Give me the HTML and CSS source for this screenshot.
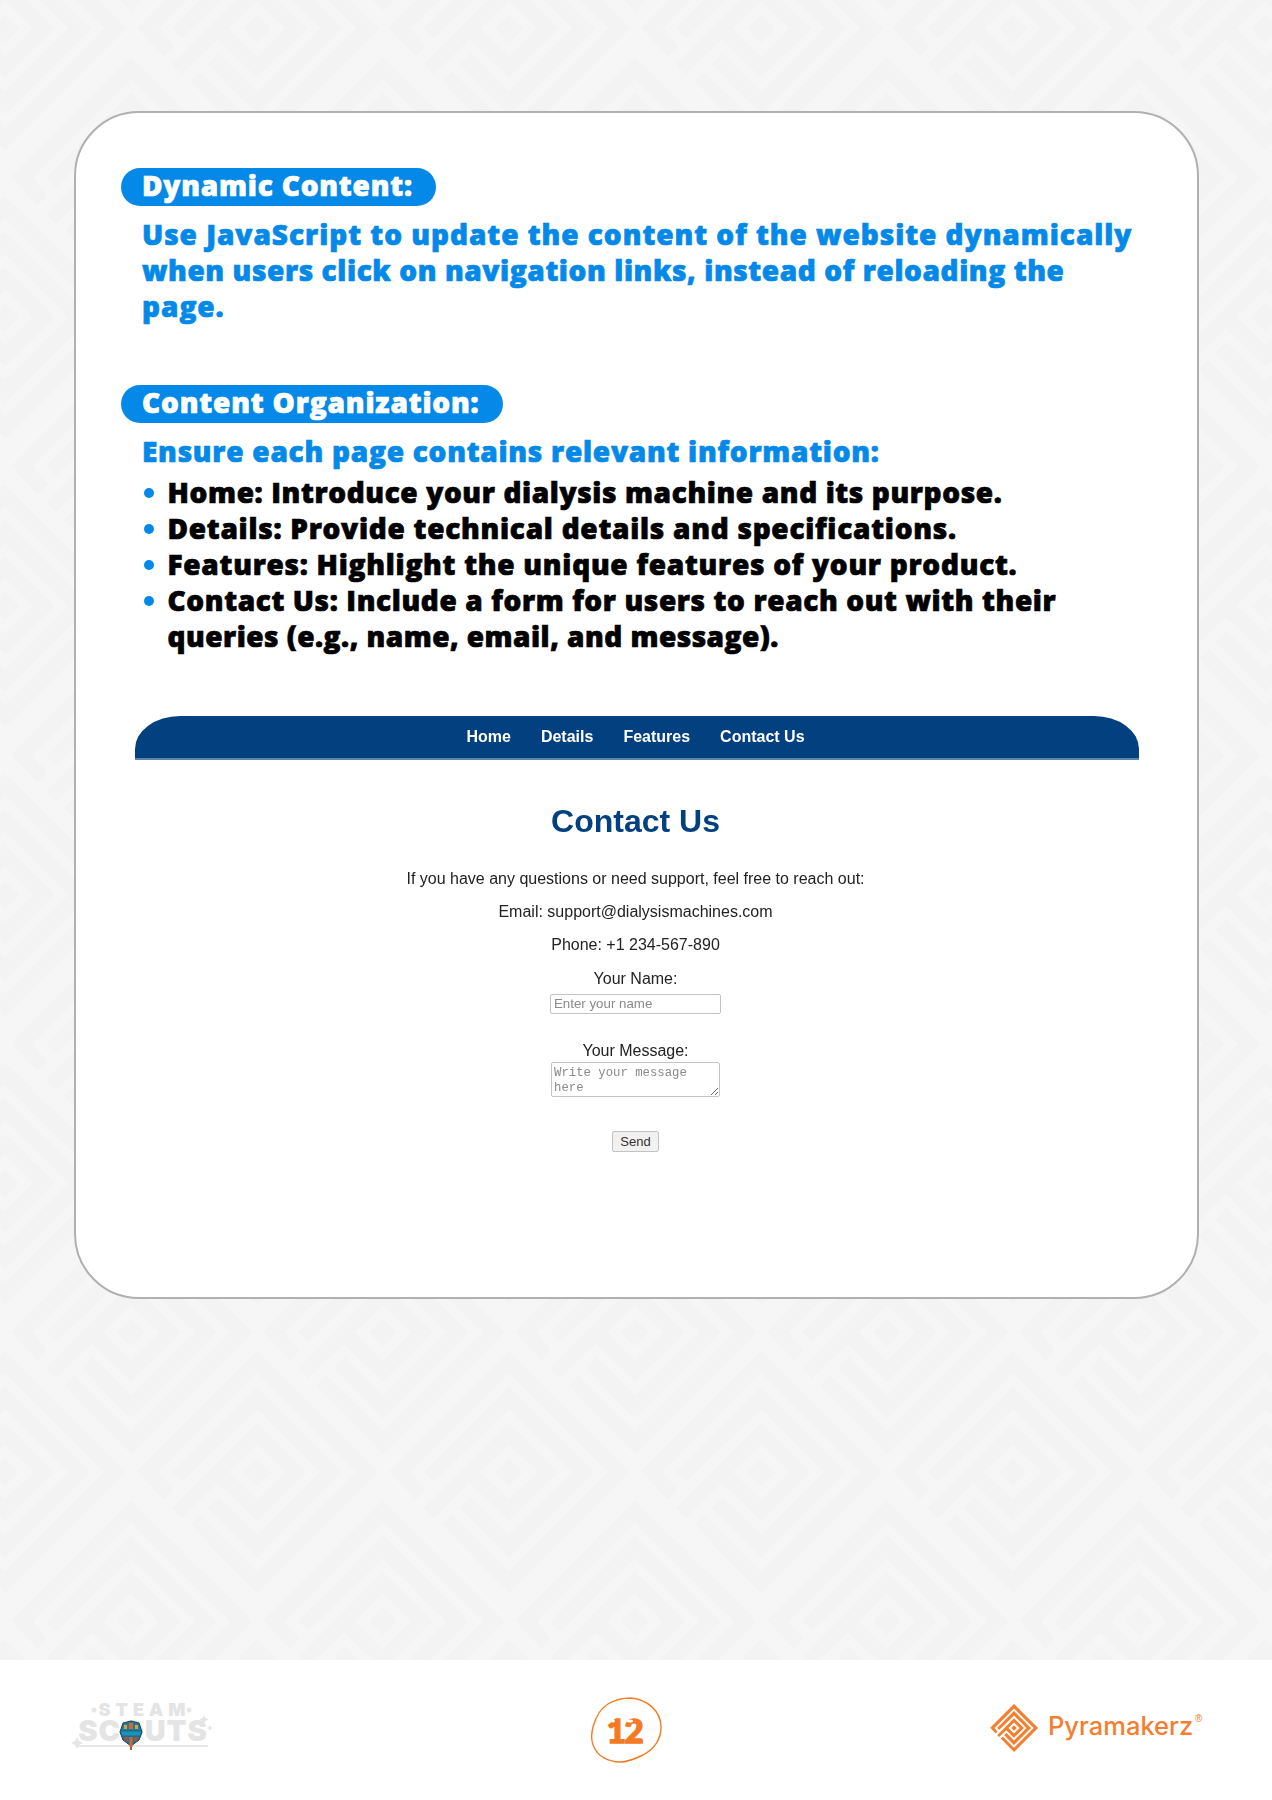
FILE: index.html
```html
<!DOCTYPE html>
<html lang="en">
<head>
<meta charset="utf-8">
<title>Dynamic Content</title>
<link rel="stylesheet" href="styles.css">
</head>
<body>
<div class="page">
  <svg class="backdrop" width="1272" height="1660" aria-hidden="true">
    <defs>
      <path id="tile" fill-rule="evenodd" d="M0,-14L14,0L0,14L-14,0Z M0,-49.7L50,0L0,49.3L-39.3,11L-75,46L-85,36Z M0,-28L-28,0L0,28L28,0Z M0,-85.7L-85,0L-75,10L0,-63L63.3,0L0,63.3L-38.3,24.3L-49.3,36L0,86L85.7,0Z M0,-121L-120,-0.7L-93.3,27.7L-83.3,17.7L-98.3,0L0,-99L99.3,0L0,99.3L-56.7,42.7L-66.7,52.7L0,121.7L121.7,0Z"/>
      <pattern id="maze" x="5" y="28.5" width="252" height="288.7" patternUnits="userSpaceOnUse">
        <use href="#tile" x="0" y="0"/>
        <use href="#tile" x="252" y="0"/>
        <use href="#tile" x="0" y="288.7"/>
        <use href="#tile" x="252" y="288.7"/>
        <use href="#tile" x="126" y="149.3"/>
      </pattern>
    </defs>
    <rect class="backdrop-base" width="1272" height="1660"/>
    <rect fill="url(#maze)" width="1272" height="1660"/>
  </svg>

  <main class="sheet">
    <section class="card">
      <h2 class="pill pill-dynamic">Dynamic Content:</h2>
      <p class="lead"><span class="fit-wide">Use JavaScript to update the content of the website dynamically</span><br><span class="fit-tight">when users click on navigation links, instead of reloading the</span><br><span class="fit-wide">page.</span></p>

      <h2 class="pill pill-org">Content Organization:</h2>
      <p class="lead">Ensure each page contains relevant information:</p>
      <ul class="points">
        <li>Home: Introduce your dialysis machine and its purpose.</li>
        <li class="fit-item">Details: Provide technical details and specifications.</li>
        <li class="fit-item">Features: Highlight the unique features of your product.</li>
        <li>Contact Us: Include a form for users to reach out with their<br><span class="fit-tail">queries (e.g., name, email, and message).</span></li>
      </ul>

      <div class="shot">
        <nav class="shot-nav">
          <a>Home</a><a>Details</a><a>Features</a><a>Contact Us</a>
        </nav>
        <div class="shot-body">
          <h1 class="shot-title">Contact Us</h1>
          <p class="shot-line shot-line-first">If you have any questions or need support, feel free to reach out:</p>
          <p class="shot-line">Email: support@dialysismachines.com</p>
          <p class="shot-line">Phone: +1 234-567-890</p>
          <label class="shot-line shot-label">Your Name:</label>
          <input class="shot-input" type="text" placeholder="Enter your name">
          <label class="shot-line shot-label shot-label-msg">Your Message:</label>
          <textarea class="shot-area" placeholder="Write your message here"></textarea>
          <button class="shot-send" type="button">Send</button>
        </div>
      </div>
    </section>
  </main>

  <footer class="foot">
    <div class="steam">
      <svg class="steam-stars" width="146" height="50" aria-hidden="true">
        <path d="M4,36 L6,40 L10,42 L6,44 L4,48 L2,44 L-2,42 L2,40Z" transform="translate(3,-2)"/>
        <path d="M134,17 L135.500,20 L138.500,21.500 L135.500,23 L134,26 L132.500,23 L129.500,21.500 L132.500,20Z" transform="translate(0,-5)"/>
        <path d="M140,22 L141,24 L143,25 L141,26 L140,28 L139,26 L137,25 L139,24Z"/>
        <circle cx="24" cy="7" r="2.500"/>
        <circle cx="119" cy="7" r="2.500"/>
      </svg>
      <div class="steam-top">STEAM</div>
      <div class="steam-main">SCOUTS</div>
      <div class="steam-rule"></div>
      <svg class="steam-badge" width="24" height="31" viewBox="0 0 24 31" aria-hidden="true">
        <path d="M12,1 L20,3 L23,12 L20,20 L12,26 L4,20 L1,12 L4,3Z" fill="#1c7c9c" stroke="#20404f" stroke-width="1"/>
        <path d="M10,3h4v6h-4z" fill="#e2622a"/>
        <path d="M5,5h3v4h-3zM16,5h3v4h-3z" fill="#d9a23d"/>
        <path d="M1,11h22l-2,5H3Z" fill="#1995bd" stroke="#1d4a5c" stroke-width=".6"/>
        <path d="M6,17h3v4h-3zM15,17h3v4h-3z" fill="#c8452c"/>
        <path d="M10.500,17h3v10h-3z" fill="#e2622a"/>
        <path d="M11,27h2v3h-2z" fill="#8b6a52"/>
      </svg>
    </div>
    <div class="folio">
      <span class="folio-num">12</span>
      <svg class="folio-ring" width="71" height="66" viewBox="0 0 71 66" aria-hidden="true">
        <path class="folio-blob" d="M39,1 C56,2 70,14 70,30 C70,42 63,52 52,58 C44,62 36,65 29,65 C18,64.500 8,60 4,52 C0,46 0,38 2,30 C5,19 10,11 17,7 C24,3 31,1 39,1Z"/>
        <ellipse class="folio-shine" cx="22" cy="24" rx="1.800" ry="1.500"/>
        <ellipse class="folio-shine" cx="39" cy="24" rx="3" ry="1.500"/>
      </svg>
    </div>
    <div class="pyra">
      <svg class="pyra-mark" width="50" height="50" viewBox="-25 -25 50 50" aria-hidden="true">
        <use href="#tile" class="pyra-shape" transform="scale(.198)"/>
      </svg>
      <span class="pyra-name">Pyramakerz</span>
      <span class="pyra-reg">®</span>
    </div>
  </footer>
</div>
</body>
</html>
```

FILE: styles.css
```css
* { box-sizing: border-box; }
html, body { margin: 0; padding: 0; background: #fff; }

.page {
  position: relative;
  width: 1272px;
  height: 1800px;
  overflow: hidden;
}

.backdrop { position: absolute; left: 0; top: 0; fill: #f3f3f3; }
.backdrop-base { fill: #f6f6f6; }

.sheet {
  position: relative;
  height: 1660px;
  padding: 111px 0 0 74px;
}

.card {
  width: 1125px;
  height: 1188px;
  padding: 54.500px 0 0 45px;
  background: #fff;
  border: 2px solid #b0b0b0;
  border-radius: 65px;
  font-family: "Open Sans", "Liberation Sans", sans-serif;
  font-weight: 800;
}

.pill {
  display: inline-block;
  vertical-align: top;
  height: 38px;
  margin: 0;
  padding: 0 23px 0 21px;
  border-radius: 19px;
  background: #0489e8;
  color: #fff;
  font-size: 28px;
  font-weight: 800;
  line-height: 35px;
  -webkit-text-stroke: .7px #fff;
}
.pill-dynamic { letter-spacing: .8px; }
.pill-org { margin-top: 61px; letter-spacing: .84px; }

.lead {
  margin: 10px 0 0 21px;
  color: #0489e8;
  font-size: 28px;
  line-height: 36px;
  letter-spacing: .75px;
  -webkit-text-stroke: .7px #0489e8;
}
.fit-wide { letter-spacing: .97px; }
.fit-tight { letter-spacing: .6px; }

.points {
  list-style: none;
  margin: 5px 0 0 46.500px;
  padding: 0;
  color: #000;
  font-size: 28px;
  line-height: 36px;
  letter-spacing: .62px;
  -webkit-text-stroke: .7px #000;
}
.points li { position: relative; }
.points .fit-item { letter-spacing: .73px; }
.fit-tail { letter-spacing: .48px; }
.points li::before {
  content: "";
  position: absolute;
  left: -24px;
  top: 14px;
  width: 10px;
  height: 10px;
  border-radius: 50%;
  background: #0489e8;
}

.shot {
  width: 1004px;
  margin: 62px 0 0 13.500px;
  font-family: "Liberation Sans", Arial, sans-serif;
  font-weight: 400;
  filter: blur(.6px);
}

.shot-nav {
  display: flex;
  justify-content: center;
  gap: 30px;
  height: 44px;
  padding: 0 2px 0 0;
  background: #03407f;
  border-bottom: 2px solid #5c83a8;
  border-radius: 45px 45px 0 0 / 33px 33px 0 0;
  color: #fff;
  font-size: 16px;
  font-weight: 700;
  line-height: 42px;
}

.shot-body {
  display: flex;
  flex-direction: column;
  align-items: center;
  padding-right: 2px;
  color: #222;
  font-size: 16px;
}

.shot-title {
  margin: 41px 0 0;
  color: #03407f;
  font-size: 32px;
  font-weight: 700;
  line-height: 40px;
}

.shot-line { margin: 15px 0 0; line-height: 18px; }
.shot-line-first { margin-top: 29px; }
.shot-label { margin-top: 16px; }
.shot-label-msg { margin-top: 28px; }

.shot-input {
  width: 171px;
  height: 20px;
  margin: 6px 0 0;
  padding: 0 3px;
  border: 1.500px solid #c4c4c4;
  border-radius: 2px;
  background: #fff;
  font: 13.300px "Liberation Sans", Arial, sans-serif;
}
.shot-input::placeholder { color: #8a8a8a; }

.shot-area {
  display: block;
  width: 169px;
  height: 35px;
  margin: 2px 0 0;
  padding: 3px 2px 2px;
  border: 1.500px solid #c4c4c4;
  border-radius: 2px;
  background: #fff;
  font: 12.300px/15px "Liberation Mono", "Courier New", monospace;
  overflow: hidden;
}
.shot-area::placeholder { color: #8a8a8a; }

.shot-send {
  width: 47px;
  height: 21px;
  margin: 34px 0 0;
  padding: 0;
  border: 1.500px solid #c2c2c2;
  border-radius: 2px;
  background: #f1f1f1;
  color: #333;
  font: 13px "Liberation Sans", Arial, sans-serif;
}

.foot {
  display: flex;
  align-items: flex-start;
  height: 140px;
  padding-left: 70px;
  background: #fff;
}

.steam {
  position: relative;
  flex: none;
  width: 146px;
  margin-top: 43px;
  color: #e4e4e4;
  font-family: "Inter", "Liberation Sans", sans-serif;
  font-weight: 900;
  text-align: center;
}
.steam-top {
  padding-left: 3px;
  font-size: 18px;
  line-height: 14px;
  letter-spacing: 5px;
}
.steam-main {
  margin-top: 2px;
  font-size: 29px;
  line-height: 24px;
  letter-spacing: 1px;
}
.steam-rule {
  width: 130px;
  height: 2px;
  margin: 2px 0 0 8px;
  background: #e6e6e6;
}
.steam-stars { position: absolute; left: 0; top: 0; fill: #e6e6e6; overflow: visible; }
.steam-badge { position: absolute; left: 49px; top: 17px; }

.folio {
  position: relative;
  flex: none;
  display: flex;
  align-items: center;
  justify-content: center;
  width: 71px;
  height: 66px;
  margin: 37px 0 0 375px;
  color: #f47b24;
  font-family: "Lato", "Liberation Sans", sans-serif;
  font-weight: 900;
}
.folio-num {
  padding-right: 4px;
  font-size: 33px;
  line-height: 1;
  letter-spacing: -1.500px;
  -webkit-text-stroke: 1.500px #f47b24;
}
.folio-ring { position: absolute; left: 0; top: 0; }
.folio-blob { fill: none; stroke: #f47b24; stroke-width: 1.400; }
.folio-shine { fill: #fff; }

.pyra {
  position: relative;
  flex: none;
  display: flex;
  align-items: center;
  gap: 9px;
  margin: 43px 0 0 327px;
  color: #f47f30;
  font-family: "Inter", "Liberation Sans", sans-serif;
}
.pyra-mark { flex: none; fill: #f47f30; }
.pyra-name { font-size: 25.500px; font-weight: 500; line-height: 36px; margin-top: -5px; }
.pyra-reg { position: absolute; left: 206px; top: 11px; font-family: "Liberation Sans", sans-serif; font-size: 10px; font-weight: 400; line-height: 1; }
```
